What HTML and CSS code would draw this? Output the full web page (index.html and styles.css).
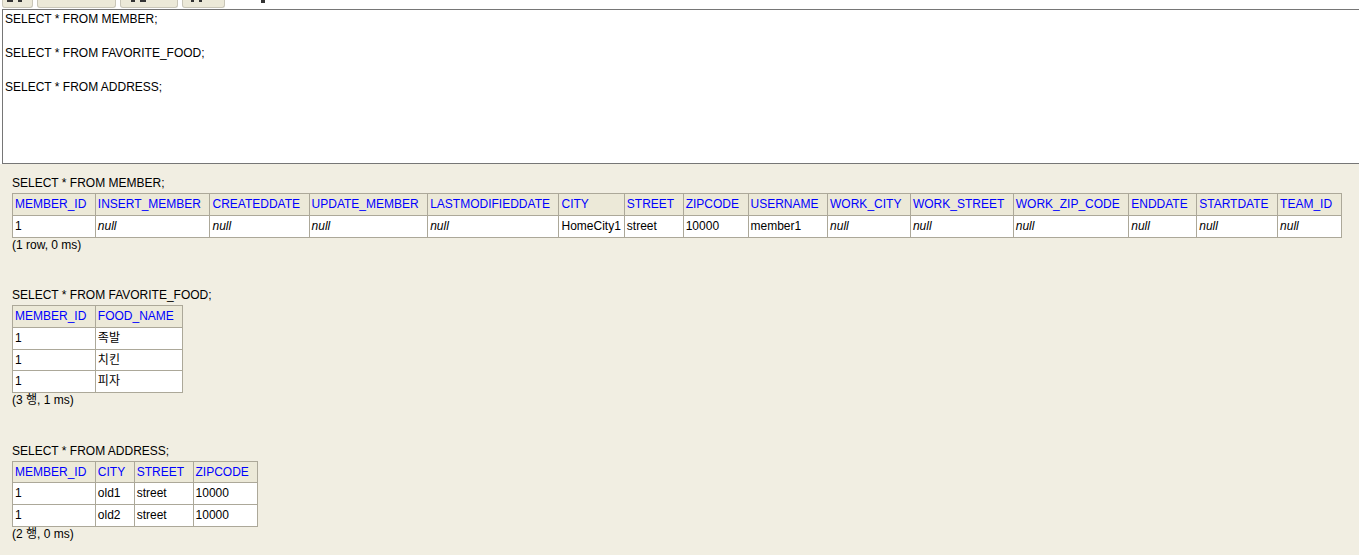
FILE: index.html
```html
<!DOCTYPE html>
<html lang="ko">
<head>
    <meta charset="UTF-8">
    <title>H2 Console</title>
    <link rel="stylesheet" href="styles.css">
</head>
<body>
    <!-- 상단 버튼 (위쪽이 잘려 보임) -->
    <div class="toolbar">
        <button class="btn b1"><span class="ink w6"></span><span class="ink w4"></span></button>
        <button class="btn b2"></button>
        <button class="btn b3"><span class="ink w4"></span><span class="ink w6"></span></button>
        <button class="btn b4"><span class="ink w3"></span><span class="ink w3"></span></button>
        <span class="ink mark"></span>
    </div>

    <textarea class="query" spellcheck="false">SELECT * FROM MEMBER;

SELECT * FROM FAVORITE_FOOD;

SELECT * FROM ADDRESS;</textarea>

    <!-- 결과 -->
    <div class="results">
        <div class="block">
            <p class="sql">SELECT * FROM MEMBER;</p>
            <table>
                <tr>
                    <th>MEMBER_ID</th><th>INSERT_MEMBER</th><th>CREATEDDATE</th><th>UPDATE_MEMBER</th><th>LASTMODIFIEDDATE</th><th>CITY</th><th>STREET</th><th>ZIPCODE</th><th>USERNAME</th><th>WORK_CITY</th><th>WORK_STREET</th><th>WORK_ZIP_CODE</th><th>ENDDATE</th><th>STARTDATE</th><th>TEAM_ID</th>
                </tr>
                <tr>
                    <td>1</td><td><i>null</i></td><td><i>null</i></td><td><i>null</i></td><td><i>null</i></td><td>HomeCity1</td><td>street</td><td>10000</td><td>member1</td><td><i>null</i></td><td><i>null</i></td><td><i>null</i></td><td><i>null</i></td><td><i>null</i></td><td><i>null</i></td>
                </tr>
            </table>
            <p class="status">(1 row, 0 ms)</p>
        </div>

        <div class="block">
            <p class="sql">SELECT * FROM FAVORITE_FOOD;</p>
            <table>
                <tr><th>MEMBER_ID</th><th>FOOD_NAME</th></tr>
                <tr><td>1</td><td>족발</td></tr>
                <tr><td>1</td><td>치킨</td></tr>
                <tr><td>1</td><td>피자</td></tr>
            </table>
            <p class="status">(3 행, 1 ms)</p>
        </div>

        <div class="block">
            <p class="sql">SELECT * FROM ADDRESS;</p>
            <table>
                <tr><th>MEMBER_ID</th><th>CITY</th><th>STREET</th><th>ZIPCODE</th></tr>
                <tr><td>1</td><td>old1</td><td>street</td><td>10000</td></tr>
                <tr><td>1</td><td>old2</td><td>street</td><td>10000</td></tr>
            </table>
            <p class="status">(2 행, 0 ms)</p>
        </div>
    </div>
</body>
</html>
```

FILE: styles.css
```css
html, body { margin: 0; padding: 0; overflow: hidden; background: #fff; }
body { font-family: "Liberation Sans", Arial, "Noto Sans CJK KR", sans-serif; font-size: 12px; color: #000; }

.toolbar { height: 9px; overflow: hidden; display: flex; align-items: flex-start; padding-left: 2px; }
.btn { box-sizing: border-box; height: 8px; margin: 0 4px 0 0; padding: 0 0 0 4px; display: flex; align-items: flex-start; gap: 5px; background: #ece9d8; border: 1px solid #c9c6b8; border-top: none; border-radius: 0 0 3px 3px; }
.b1 { width: 31px; }
.b2 { width: 79px; }
.b3 { width: 58px; padding-left: 10px; }
.b4 { width: 43px; padding-left: 8px; }
.ink { display: block; height: 2px; background: #333; }
.w3 { width: 3px; }
.w4 { width: 4px; }
.w6 { width: 6px; }
.mark { width: 4px; height: 3px; margin-left: 32px; }

.query { display: block; box-sizing: border-box; margin: 0 0 0 2px; width: 1380px; height: 155px; padding: 1px 2px; border: 1px solid #767676; resize: none; outline: none; font-family: "Liberation Sans", Arial, sans-serif; font-size: 12px; line-height: 16.9px; color: #000; background: #fff; }

.results { background: #f1eee2; padding: 12px 12px 0; min-height: 400px; }
.block { margin-bottom: 36.5px; }
.sql, .status { margin: 0; line-height: 14px; }
.sql { margin-bottom: 3px; }

table { border-collapse: collapse; }
th, td { border: 1px solid #aca899; font-size: 12px; line-height: 14.75px; text-align: left; white-space: nowrap; vertical-align: top; }
th { background: #ece9d8; color: #0000ff; font-weight: normal; padding: 3px 8.5px 3px 2px; }
td { background: #fff; padding: 3px 3px 3px 2px; }
td i { font-style: italic; }
```
